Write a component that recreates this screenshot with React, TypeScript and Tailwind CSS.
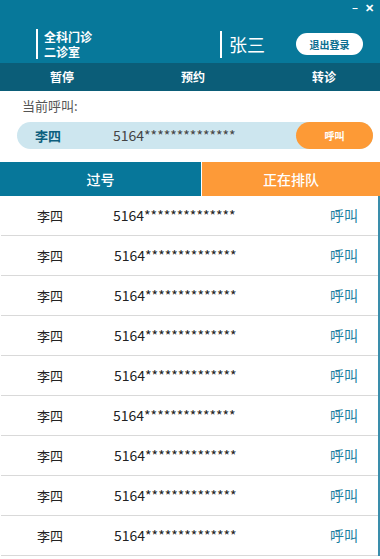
import React from 'react';

const font = { fontFamily: '"Noto Sans CJK SC", "Noto Sans", sans-serif' };

const rows = Array.from({ length: 9 }, (_, i) => ({
  name: '李四',
  id: '5164**************',
  shift: i === 0 || i === 5 ? 0 : 1,
}));

export default function App() {
  return (
    <div className="w-[380px] h-[559px] overflow-hidden bg-white" style={font}>
      <header className="relative h-[63px] bg-[#07789a]">
        <div className="absolute top-[1px] right-[6px] flex items-center gap-[7px] text-white text-[11px] font-bold leading-[12px]">
          <span>–</span>
          <span>✕</span>
        </div>
        <div className="flex items-center pt-[29px]">
          <div className="ml-[36px] flex h-[30px] w-[184px] items-center">
            <div className="h-[30px] w-[2px] bg-white" />
            <div className="ml-[6px] text-[12px] font-bold leading-[15px] text-white">
              <div>全科门诊</div>
              <div>二诊室</div>
            </div>
          </div>
          <div className="flex h-[27px] w-[76px] items-center">
            <div className="h-[27px] w-[2px] bg-white" />
            <span className="ml-[7px] text-[18px] leading-none text-white">张三</span>
          </div>
          <button className="h-[22px] w-[67px] rounded-full bg-white text-[10px] font-bold text-[#0b6f90]">
            退出登录
          </button>
        </div>
      </header>

      <nav className="flex h-[28px] items-center gap-[107px] bg-[#0b5d78] pl-[50px] text-[12px] font-bold text-white">
        <span>暂停</span>
        <span>预约</span>
        <span>转诊</span>
      </nav>

      <div className="pl-[22px] pt-[6px] text-[13px] leading-[18px] text-[#555]">当前呼叫:</div>

      <div className="ml-[17px] mr-[7px] mt-[7px] flex h-[27px] items-center rounded-full bg-[#cde6ef]">
        <span className="ml-[18px] w-[78px] text-[13px] font-bold text-[#0c5f7e]">李四</span>
        <span className="text-[14px] text-[#444]">5164**************</span>
        <button className="ml-auto h-[27px] w-[77px] rounded-full bg-[#fd9a36] text-[10px] font-bold text-white">
          呼叫
        </button>
      </div>

      <div className="mt-[13px] flex h-[34px] text-[14px] font-medium text-white">
        <div className="flex w-[201px] items-center justify-center bg-[#07779a]">过号</div>
        <div className="flex flex-1 items-center justify-center border-l border-white bg-[#fd9a38]">正在排队</div>
      </div>

      <div className="border-r-2 border-[#3a8dab]">
        {rows.map((r, i) => (
          <div key={i} className="ml-[1px] flex h-[40px] items-center border-b border-[#d9d9d9]">
            <span className="ml-[36px] w-[76px] text-[13px] text-[#222]">{r.name}</span>
            <span className={`${r.shift ? 'ml-[1px]' : 'ml-0'} text-[14px] text-[#222]`}>{r.id}</span>
            <span className="ml-auto mr-[20px] text-[14px] text-[#1b7ea0]">呼叫</span>
          </div>
        ))}
      </div>
    </div>
  );
}
